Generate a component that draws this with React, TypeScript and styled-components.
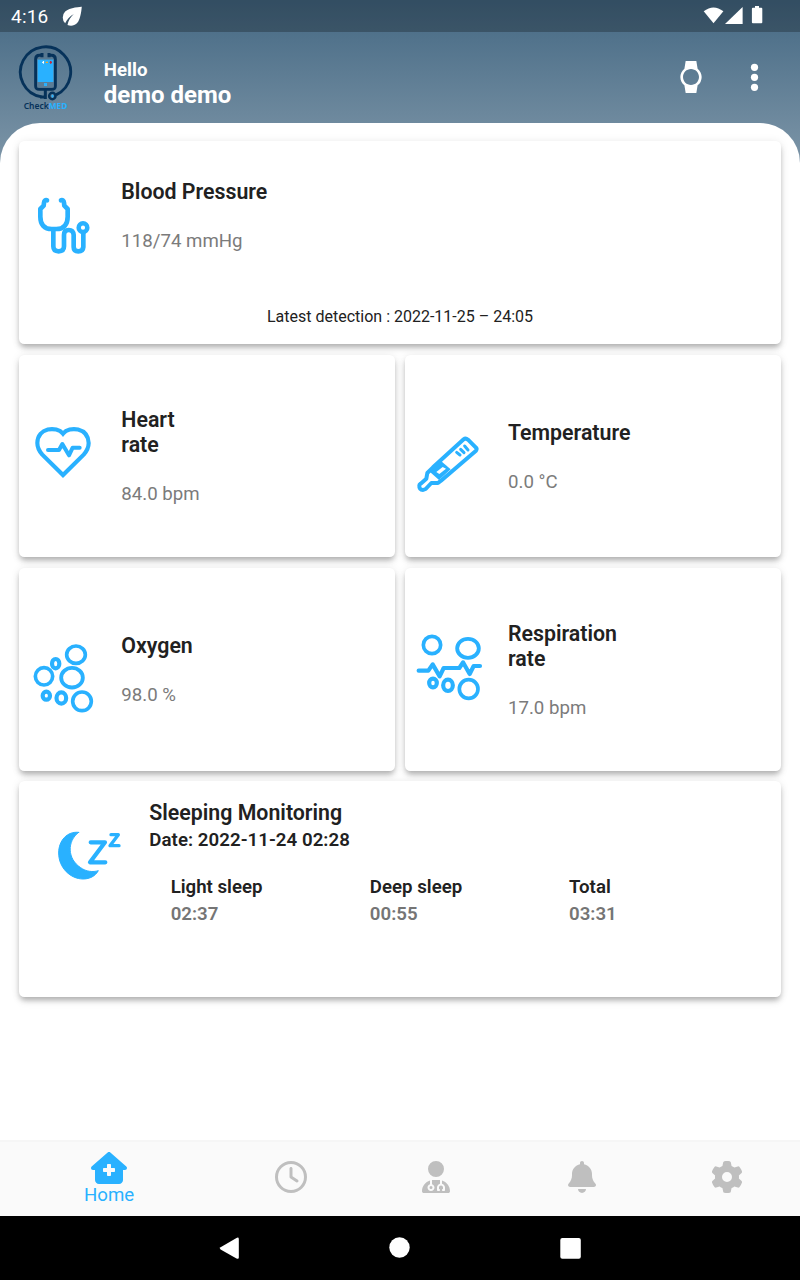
import React from 'react';
import styled, { createGlobalStyle } from 'styled-components';
import { FaBell, FaGear, FaHouseMedical, FaRegClock, FaUserDoctor } from 'react-icons/fa6';
import { MdEco, MdWatch } from 'react-icons/md';

const BLUE = '#29b1ff';

const GlobalStyle = createGlobalStyle`
  *, *::before, *::after { box-sizing: border-box; }
  body {
    margin: 0;
    font-family: Roboto, "Liberation Sans", sans-serif;
    color: #212121;
    background: #fff;
  }
  svg { display: block; flex: none; }
`;

const Screen = styled.div`
  display: flex;
  flex-direction: column;
  width: 800px;
  height: 1280px;
  overflow: hidden;
  background: linear-gradient(#446883 0, #7f97a9 170px, #fff 170px);
`;

const StatusBar = styled.div`
  display: flex;
  align-items: center;
  height: 32px;
  padding: 0 37px 0 11px;
  background: rgba(0, 0, 0, 0.25);
  color: #fff;
`;

const Time = styled.span`
  font-size: 19px;
  line-height: 33px;
  letter-spacing: 0.2px;
  margin-right: 9.8px;
`;

const StatusIcons = styled.div`
  margin-left: auto;
`;

const Header = styled.header`
  display: flex;
  align-items: flex-start;
  height: 90.67px;
  padding: 12px 25px 0 16px;
  color: #fff;
`;

const Greeting = styled.div`
  margin: 15px auto 0 27.8px;
  font-weight: 700;
`;

const Hello = styled.div`
  font-size: 18.67px;
  line-height: 22px;
`;

const UserName = styled.div`
  font-size: 24px;
  line-height: 28px;
`;

const Actions = styled.div`
  display: flex;
  align-items: center;
  gap: 28px;
  height: 40px;
  margin-top: 13px;
`;

const Sheet = styled.main`
  flex: 1;
  padding: 18.67px;
  background: #fff;
  border-radius: 40px 40px 0 0;
`;

const Grid = styled.div`
  display: grid;
  grid-template-columns: 1fr 1fr;
  grid-template-rows: repeat(3, 202.67px) 216px;
  gap: 10.67px;
`;

const Card = styled.section<{ $wide?: boolean }>`
  grid-column: ${(p) => (p.$wide ? '1 / -1' : 'auto')};
  display: flex;
  flex-direction: column;
  background: #fff;
  border-radius: 5.33px;
  box-shadow:
    0 4px 5px -1px rgba(0, 0, 0, 0.2),
    0 5px 9px -1px rgba(0, 0, 0, 0.1),
    0 1px 10px rgba(0, 0, 0, 0.09);
`;

const Reading = styled.div<{ $height?: string }>`
  display: flex;
  align-items: center;
  height: ${(p) => p.$height ?? '100%'};
  padding-top: 0.8px;
  padding-left: 7.33px;
  gap: 23.33px;
`;

const Title = styled.h2<{ $width?: string }>`
  margin: 0;
  max-width: ${(p) => p.$width ?? 'none'};
  font-size: 21.33px;
  line-height: 25px;
  font-weight: 600;
`;

const Value = styled.div`
  margin-top: 26px;
  font-size: 18.67px;
  line-height: 22px;
  color: #7b7b7b;
`;

const Caption = styled.div`
  padding-top: 17.8px;
  font-size: 16px;
  line-height: 19px;
  text-align: center;
`;

const SleepBody = styled.div`
  display: flex;
  align-items: flex-start;
  padding: 19px 0 0 35.33px;
`;

const MoonBox = styled.div`
  margin: 25.67px 23.33px 0 0;
`;

const SleepText = styled.div`
  flex: 1;
`;

const SleepDate = styled.div`
  margin-top: 4px;
  font-size: 18.67px;
  line-height: 22px;
  font-weight: 600;
  letter-spacing: 0.05px;
`;

const Phases = styled.div`
  display: grid;
  grid-template-columns: repeat(3, 199.2px);
  margin: 25px 0 0 21.33px;
`;

const Phase = styled.div`
  font-size: 18.67px;
  line-height: 22px;
  font-weight: 600;
`;

const Duration = styled.div`
  margin-top: 4.67px;
  color: #757575;
`;

const TabBar = styled.nav`
  display: flex;
  height: 76px;
  background: #fafafa;
  border-top: 2px solid #f6f6f6;
  font-size: 32px;
`;

const Tab = styled.div<{ $active?: boolean }>`
  flex: ${(p) => (p.$active ? 1.5 : 1)} 1 0;
  display: flex;
  flex-direction: column;
  align-items: center;
  justify-content: center;
  color: ${(p) => (p.$active ? BLUE : '#bfbfbf')};
  padding-bottom: ${(p) => (p.$active ? '1px' : '4px')};
`;

const HomeIcon = styled(FaHouseMedical)`
  width: 36px;
  height: 32px;
`;

const TabLabel = styled.span`
  font-size: 18.67px;
  line-height: 22px;
`;

const SystemNav = styled.div`
  height: 64px;
  background: #000;
`;

const Logo = () => (
  <svg width="60" height="69" viewBox="48 132 180 207" fill="none">
    <path d="M125 290.600 A75.500 75.500 0 1 1 168 284.600" stroke="#06325a" strokeWidth="8.500" />
    <path d="M126 159v13M147 159v13M127 166h-9q-11 0-11 12v80q0 10 11 10h37q11 0 11-10v-80q0-12-11-12h-9" stroke="#06325a" strokeWidth="9" />
    <path d="M136 268v29M120 291h17" stroke="#06325a" strokeWidth="9" />
    <rect x="112" y="177" width="49" height="86" fill="#5b7d96" />
    <rect x="113" y="179" width="47" height="67" fill={BLUE} />
    <path d="M132 249h9v9h-9z" fill={BLUE} />
    <path d="M126 187h6M130.500 183v8" stroke="#fff" strokeWidth="3" />
    <path d="M137 187h7" stroke="#f5a623" strokeWidth="4" />
    <path d="M149 187h7M152 183v8" stroke="#c32b3f" strokeWidth="4" />
    <circle cx="157" cy="288" r="9.500" stroke="#06325a" strokeWidth="7.500" />
    <path d="M153 288h9M157.500 284v9" stroke={BLUE} strokeWidth="3" />
    <text x="71" y="327" fontFamily="Noto Sans, sans-serif" fontSize="27" fontWeight="600" fill="#06325a" textLength="75" lengthAdjust="spacingAndGlyphs">Check</text>
    <text x="146" y="327" fontFamily="Noto Sans, sans-serif" fontSize="27" fontWeight="700" fill={BLUE} textLength="56" lengthAdjust="spacingAndGlyphs">MED</text>
  </svg>
);

const SignalIcons = () => (
  <svg width="60" height="20" viewBox="0 0 60 20" fill="#fff">
    <path d="M.7 5.200 Q10.500-2.400 20.400 5.200L10.500 17.300z" />
    <path d="M39.600 .9V18H22z" />
    <path d="M52 0h4v1.700h2.300q1 0 1 1v13.600q0 1-1 1h-8.400q-1 0-1-1V2.700q0-1 1-1h2.100z" />
  </svg>
);

const MenuDots = () => (
  <svg width="40" height="40" viewBox="0 0 40 40" fill="#fff">
    <circle cx="19.500" cy="10.300" r="3.600" />
    <circle cx="19.500" cy="20.300" r="3.600" />
    <circle cx="19.500" cy="30.300" r="3.600" />
  </svg>
);

interface DrawingProps {
  viewBox: string;
  height?: number;
  children: React.ReactNode;
}

const Drawing = ({ viewBox, height = 88, children }: DrawingProps) => (
  <svg width="72" height={height} viewBox={viewBox} fill="none" stroke={BLUE} strokeWidth="12.500" strokeLinecap="round" strokeLinejoin="round">
    {children}
  </svg>
);

const Stethoscope = () => (
  <Drawing viewBox="48 6 216 264">
    <path strokeWidth="14" d="M111 91q-8-2-9 7l-1 9-10 10v23c0 24 12 37 34 37h14c22 0 34-13 34-37v-23l-10-10-1-9q-1-9-9-7" />
    <path strokeWidth="14" d="M130 180v49q0 15 16 15t16-15v-34q0-15 14-15t15 15v36q0 13 14 13t15-13v-43" />
    <circle cx="219" cy="173" r="13" strokeWidth="13.500" />
  </Drawing>
);

const Heart = () => (
  <Drawing viewBox="48 36 216 264">
    <path strokeLinejoin="miter" d="M159 101C139 77 83 83 82 129c0 17 8 27 15 35l62 61 62-61c7-8 15-18 15-35-2-46-57-52-77-28z" />
    <path strokeWidth="12" d="M114 150h33l10-18 20 34 11-23h21" />
  </Drawing>
);

const Thermometer = () => (
  <Drawing viewBox="69 36 216 264">
    <path strokeWidth="12" d="M88 256q-1 14 11 14l8-3 17-18h20l9-7 105-90q4-6-1-10l-23-23q-7-6-13-1l-92 84-17 17-3 17-17 15q-4 3-4 5z" />
    <path fill={BLUE} stroke="none" d="M153 183l29 25-35 32-27-24z" />
    <path fill="#fff" stroke="none" d="M139 216l19-15 10 5-20 16z" />
    <path strokeWidth="9" d="M200 157l10 8M212 148l10 10M224 138l10 12" />
  </Drawing>
);

const Bubbles = () => (
  <Drawing viewBox="48 47 216 264">
    <ellipse cx="198" cy="133" rx="28" ry="26" strokeWidth="11" />
    <ellipse cx="137" cy="160" rx="11" ry="14" />
    <circle cx="102" cy="198" r="26" strokeWidth="11" />
    <ellipse cx="186" cy="202" rx="32.500" ry="29.500" strokeWidth="11.500" />
    <ellipse cx="109" cy="256" rx="11" ry="12" />
    <ellipse cx="154" cy="263" rx="14.500" ry="17" />
    <ellipse cx="216" cy="273" rx="28" ry="28" strokeWidth="11" />
  </Drawing>
);

const Respiration = () => (
  <Drawing viewBox="69 47 216 264">
    <circle cx="126" cy="104" r="26" strokeWidth="11" />
    <ellipse cx="234" cy="114" rx="32.500" ry="28.500" strokeWidth="11.500" />
    <path d="M86 181h29l13-19 21 36 12-25h47l11-17 20 35 12-24h19" />
    <ellipse cx="129" cy="218" rx="11.500" ry="13" />
    <ellipse cx="174" cy="225" rx="14.500" ry="17" />
    <ellipse cx="236" cy="236" rx="28" ry="28" strokeWidth="11" />
  </Drawing>
);

const SleepMoon = () => (
  <Drawing viewBox="132 138 216 180" height={60}>
    <path fill={BLUE} strokeWidth="3" d="M206 157c-34-4-60 24-60 62 0 45 36 78 73 78 21 0 37-9 46-25-16 5-37 3-53-9-40-26-42-79-6-106z" />
    <path d="M242 187h43l-45 60h46" />
    <path strokeWidth="10" d="M303 164h22l-25 33h27" />
  </Drawing>
);

interface MetricProps {
  icon: React.ReactNode;
  title: string;
  value: string;
  titleWidth?: string;
  height?: string;
}

const Metric = ({ icon, title, value, titleWidth, height }: MetricProps) => (
  <Reading $height={height}>
    {icon}
    <div>
      <Title $width={titleWidth}>{title}</Title>
      <Value>{value}</Value>
    </div>
  </Reading>
);

const phases = [
  ['Light sleep', '02:37'],
  ['Deep sleep', '00:55'],
  ['Total', '03:31'],
];

export default function App() {
  return (
    <Screen>
      <GlobalStyle />
      <StatusBar>
        <Time>4:16</Time>
        <MdEco size={28.5} />
        <StatusIcons>
          <SignalIcons />
        </StatusIcons>
      </StatusBar>
      <Header>
        <Logo />
        <Greeting>
          <Hello>Hello</Hello>
          <UserName>demo demo</UserName>
        </Greeting>
        <Actions>
          <MdWatch size={32} />
          <MenuDots />
        </Actions>
      </Header>
      <Sheet>
        <Grid>
          <Card $wide>
            <Metric icon={<Stethoscope />} title="Blood Pressure" value="118/74 mmHg" height="148.2px" />
            <Caption>Latest detection : 2022-11-25 – 24:05</Caption>
          </Card>
          <Card>
            <Metric icon={<Heart />} title="Heart rate" value="84.0 bpm" titleWidth="80px" />
          </Card>
          <Card>
            <Metric icon={<Thermometer />} title="Temperature" value="0.0 °C" />
          </Card>
          <Card>
            <Metric icon={<Bubbles />} title="Oxygen" value="98.0 %" />
          </Card>
          <Card>
            <Metric icon={<Respiration />} title="Respiration rate" value="17.0 bpm" titleWidth="130px" />
          </Card>
          <Card $wide>
            <SleepBody>
              <MoonBox>
                <SleepMoon />
              </MoonBox>
              <SleepText>
                <Title>Sleeping Monitoring</Title>
                <SleepDate>Date: 2022-11-24 02:28</SleepDate>
                <Phases>
                  {phases.map(([name, time]) => (
                    <Phase key={name}>
                      {name}
                      <Duration>{time}</Duration>
                    </Phase>
                  ))}
                </Phases>
              </SleepText>
            </SleepBody>
          </Card>
        </Grid>
      </Sheet>
      <TabBar>
        <Tab $active>
          <HomeIcon />
          <TabLabel>Home</TabLabel>
        </Tab>
        <Tab><FaRegClock /></Tab>
        <Tab><FaUserDoctor /></Tab>
        <Tab><FaBell /></Tab>
        <Tab><FaGear /></Tab>
      </TabBar>
      <SystemNav>
        <svg width="800" height="64" viewBox="0 0 800 64" fill="#fff">
          <path d="M220.600 31.200 236.500 21.900q2.300-1 2.300 1v18.600q0 2-2.300 1L220.600 33.500q-1.700-1.200 0-2.300z" />
          <circle cx="399.500" cy="31.500" r="10.200" />
          <rect x="560.300" y="22" width="20.500" height="20.700" rx="2" />
        </svg>
      </SystemNav>
    </Screen>
  );
}
